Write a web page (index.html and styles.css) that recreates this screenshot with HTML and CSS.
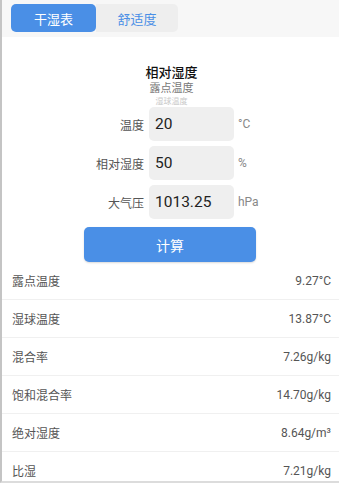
FILE: index.html
```html
<!DOCTYPE html>
<html lang="zh-CN">
<head>
    <meta charset="UTF-8">
    <meta name="viewport" content="width=device-width, initial-scale=1.0">
    <title>干湿表</title>
    <link rel="stylesheet" href="styles.css">
</head>
<body>
    <div class="page">
        <div class="tab-bar">
            <div class="tabs">
                <div class="tab active">干湿表</div>
                <div class="tab">舒适度</div>
            </div>
        </div>

        <div class="picker">
            <div class="picker-item selected">相对湿度</div>
            <div class="picker-item">露点温度</div>
            <div class="picker-item faint">湿球温度</div>
        </div>

        <div class="form">
            <label class="form-label">温度</label>
            <div class="form-input">20</div>
            <span class="form-unit">°C</span>

            <label class="form-label">相对湿度</label>
            <div class="form-input">50</div>
            <span class="form-unit">%</span>

            <label class="form-label">大气压</label>
            <div class="form-input">1013.25</div>
            <span class="form-unit">hPa</span>
        </div>

        <div class="btn-wrap">
            <button class="calc-btn">计算</button>
        </div>

        <ul class="results">
            <li><span>露点温度</span><span>9.27°C</span></li>
            <li><span>湿球温度</span><span>13.87°C</span></li>
            <li><span>混合率</span><span>7.26g/kg</span></li>
            <li><span>饱和混合率</span><span>14.70g/kg</span></li>
            <li><span>绝对湿度</span><span>8.64g/m³</span></li>
            <li><span>比湿</span><span>7.21g/kg</span></li>
        </ul>
    </div>
</body>
</html>
```

FILE: styles.css
```css
body {
    margin: 0;
    font-family: Roboto, "Noto Sans CJK SC", sans-serif;
    background: #fff;
    color: #333;
}
.page {
    width: 337px;
    height: 481px;
    overflow: hidden;
    border-left: 2px solid #c4c4c4;
    border-bottom: 2px solid #dcdcdc;
}
.tab-bar {
    height: 37px;
    background: #f7f7f7;
    padding: 4px 0 0 9px;
    box-sizing: border-box;
}
.tabs {
    display: flex;
    height: 28px;
}
.tab {
    width: 82px;
    display: flex;
    align-items: center;
    justify-content: center;
    font-size: 13px;
    color: #4a8fe6;
    background: #eeeeee;
    border-radius: 0 5px 5px 0;
}
.tab.active {
    width: 85px;
    background: #4a8fe6;
    color: #fff;
    border-radius: 5px;
}
.picker {
    margin-top: 27px;
    text-align: center;
    padding-left: 2px;
    height: 43px;
}
.picker-item {
    font-size: 11px;
    color: #777;
    line-height: 14px;
}
.picker-item.selected {
    font-size: 13px;
    color: #111;
    font-weight: 500;
    line-height: 18px;
}
.picker-item.faint {
    font-size: 8px;
    color: #c8c8c8;
    line-height: 11px;
}
.form {
    display: grid;
    grid-template-columns: 142px 85px auto;
    grid-auto-rows: 34px;
    column-gap: 5px;
    row-gap: 5px;
    align-items: center;
}
.form-label {
    text-align: right;
    font-size: 12px;
    color: #555;
}
.form-input {
    height: 34px;
    box-sizing: border-box;
    background: #efefef;
    border-radius: 5px;
    padding-left: 6px;
    display: flex;
    align-items: center;
    font-size: 15.5px;
    color: #222;
}
.form-unit {
    font-size: 12px;
    color: #888;
    margin-left: -1px;
}
.btn-wrap {
    padding: 8px 0 0 82px;
    height: 35px;
}
.calc-btn {
    width: 172px;
    height: 35px;
    border: none;
    border-radius: 5px;
    background: #4a8fe6;
    color: #fff;
    font-family: inherit;
    font-size: 14px;
    box-shadow: 0 1px 2px rgba(0,0,0,0.15);
}
.results {
    list-style: none;
    margin: 0;
    padding: 0;
}
.results li {
    height: 37px;
    display: flex;
    align-items: center;
    justify-content: space-between;
    padding: 0 8px 0 10px;
    border-bottom: 1px solid #f0f0f0;
    font-size: 12px;
    color: #555;
}
```
